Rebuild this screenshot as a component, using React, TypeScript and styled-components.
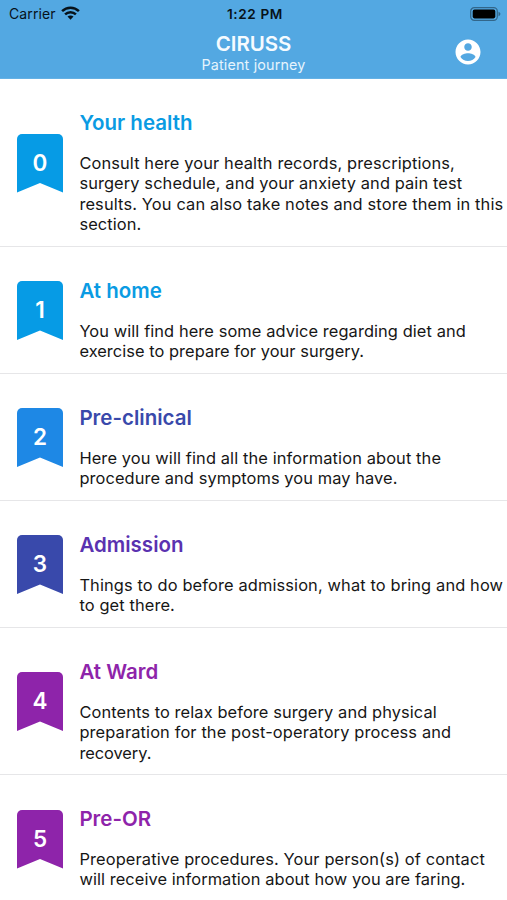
import React from "react";
import styled, { createGlobalStyle } from "styled-components";

const GlobalStyle = createGlobalStyle`
  * { box-sizing: border-box; }
  html, body { margin: 0; padding: 0; background: #fff; }
  body { font-family: Inter, "Liberation Sans", sans-serif; overflow: hidden; }
`;

const Screen = styled.div`
  width: 507px;
  height: 900px;
  overflow: hidden;
  background: #fff;
`;

const Header = styled.header`
  height: 79px;
  background: #53a8e2;
  border-bottom: 1px solid #64b1e5;
`;

const StatusBar = styled.div`
  height: 27px;
  display: grid;
  grid-template-columns: 1fr auto 1fr;
  align-items: center;
  padding: 1px 6px 0 9px;
  color: #07121a;
`;

const Carrier = styled.div`
  display: flex;
  align-items: center;
  gap: 5px;
  font-size: 14px;
  line-height: 18px;
  letter-spacing: 0.12px;

  svg { margin-bottom: 2px; }
`;

const Clock = styled.div`
  font-size: 13.6px;
  font-weight: 600;
  line-height: 18px;
  letter-spacing: 0.6px;
`;

const Battery = styled.div`
  display: flex;
  justify-content: flex-end;
  padding-bottom: 1px;
`;

const NavBar = styled.div`
  display: grid;
  grid-template-columns: 60px 1fr 60px;
  align-items: start;
  color: #f5fbff;
`;

const Titles = styled.div`
  grid-column: 2;
  text-align: center;
  padding-top: 5px;
`;

const AppTitle = styled.h1`
  margin: 0;
  font-size: 20.5px;
  font-weight: 600;
  line-height: 24px;
  letter-spacing: -0.1px;
`;

const Subtitle = styled.div`
  font-size: 14.3px;
  line-height: 18px;
  letter-spacing: 0.18px;
  color: #e6f4fd;
`;

const ProfileButton = styled.button`
  grid-column: 3;
  justify-self: start;
  display: flex;
  margin: 10px 0 0 6px;
  padding: 0;
  border: 0;
  background: none;
  color: #fff;
`;

const Row = styled.section<{ $height: number }>`
  display: grid;
  grid-template-columns: 79.4px 1fr;
  height: ${(p) => p.$height}px;
  border-bottom: 1px solid #e6e6e8;
`;

const Ribbon = styled.div<{ $color: string }>`
  align-self: center;
  margin: 1px 0 0 17px;
  width: 46px;
  height: 59px;
  display: flex;
  justify-content: center;
  padding-top: 15px;
  border-radius: 5px 5px 0 0;
  background: ${(p) => p.$color};
  clip-path: polygon(0 0, 100% 0, 100% 100%, 50% 84%, 0 100%);
  color: #fff;
  font-size: 22.5px;
  font-weight: 600;
  line-height: 28px;
`;

const Content = styled.div`
  padding-top: 31px;
`;

const RowTitle = styled.h2<{ $color: string }>`
  margin: 0 0 17px;
  color: ${(p) => p.$color};
  font-size: 20.5px;
  font-weight: 600;
  line-height: 26px;
`;

const Line = styled.span<{ $spacing: number }>`
  display: block;
  white-space: nowrap;
  color: #161616;
  font-size: 16.4px;
  line-height: 20.35px;
  letter-spacing: ${(p) => p.$spacing}px;
`;

type Stage = { title: string; color: string; ribbon: string; height: number; lines: [string, number][] };

const stages: Stage[] = [
  {
    title: "Your health", color: "#0a9be3", ribbon: "#069be5", height: 168,
    lines: [
      ["Consult here your health records, prescriptions,", 0.12],
      ["surgery schedule, and your anxiety and pain test", 0.11],
      ["results. You can also take notes and store them in this", 0.14],
      ["section.", 0.1],
    ],
  },
  {
    title: "At home", color: "#0a9be3", ribbon: "#069be5", height: 127,
    lines: [["You will find here some advice regarding diet and", 0.09], ["exercise to prepare for your surgery.", 0.05]],
  },
  {
    title: "Pre-clinical", color: "#3949ab", ribbon: "#1e88e5", height: 127,
    lines: [["Here you will find all the information about the", 0.12], ["procedure and symptoms you may have.", 0.09]],
  },
  {
    title: "Admission", color: "#5a32b0", ribbon: "#3949ab", height: 127,
    lines: [["Things to do before admission, what to bring and how", 0.13], ["to get there.", 0.12]],
  },
  {
    title: "At Ward", color: "#8e24aa", ribbon: "#8e24aa", height: 147,
    lines: [
      ["Contents to relax before surgery and physical", 0.1],
      ["preparation for the post-operatory process and", 0.13],
      ["recovery.", -0.05],
    ],
  },
  {
    title: "Pre-OR", color: "#8e24aa", ribbon: "#8e24aa", height: 128,
    lines: [
      ["Preoperative procedures. Your person(s) of contact", 0.13],
      ["will receive information about how you are faring.", 0.08],
    ],
  },
];

const WifiIcon = () => (
  <svg width="19" height="14" viewBox="0 0 19 14" fill="none" stroke="#07121a" strokeWidth="2.5">
    <path d="M1.1 5.1C5.8.5 13.2.5 17.9 5.1" />
    <path d="M4.1 8.3C7.1 5.4 11.9 5.4 14.9 8.3" />
    <path d="M6.5 10.6C8.1 9 10.9 9 12.5 10.6L9.5 13.7Z" fill="#07121a" stroke="none" />
  </svg>
);

const BatteryIcon = () => (
  <svg width="31" height="14" viewBox="0 0 31 14">
    <rect x="0.7" y="0.7" width="26.6" height="12.6" rx="3.6" fill="none" stroke="#32668a" strokeWidth="1.2" />
    <rect x="2.7" y="2.6" width="22.6" height="8.8" rx="1.8" fill="#000" />
    <path d="M28.5 4.8C31 5.6 31 8.4 28.5 9.2Z" fill="#32668a" />
  </svg>
);

const ProfileIcon = () => (
  <svg width="30" height="30" viewBox="0 0 24 24" fill="currentColor">
    <path d="M12 2C6.48 2 2 6.48 2 12s4.48 10 10 10 10-4.48 10-10S17.52 2 12 2zm0 3c1.66 0 3 1.34 3 3s-1.34 3-3 3-3-1.34-3-3 1.34-3 3-3zm0 14.2c-2.5 0-4.71-1.28-6-3.22.03-1.99 4-3.08 6-3.08 1.99 0 5.97 1.09 6 3.08-1.29 1.94-3.5 3.22-6 3.22z" />
  </svg>
);

export default function App() {
  return (
    <Screen>
      <GlobalStyle />
      <Header>
        <StatusBar>
          <Carrier>Carrier <WifiIcon /></Carrier>
          <Clock>1:22 PM</Clock>
          <Battery><BatteryIcon /></Battery>
        </StatusBar>
        <NavBar>
          <Titles>
            <AppTitle>CIRUSS</AppTitle>
            <Subtitle>Patient journey</Subtitle>
          </Titles>
          <ProfileButton aria-label="Profile"><ProfileIcon /></ProfileButton>
        </NavBar>
      </Header>
      <main>
        {stages.map((s, i) => (
          <Row key={s.title} $height={s.height}>
            <Ribbon $color={s.ribbon}>{i}</Ribbon>
            <Content>
              <RowTitle $color={s.color}>{s.title}</RowTitle>
              {s.lines.map(([text, spacing]) => (
                <Line key={text} $spacing={spacing}>{text}</Line>
              ))}
            </Content>
          </Row>
        ))}
      </main>
    </Screen>
  );
}
